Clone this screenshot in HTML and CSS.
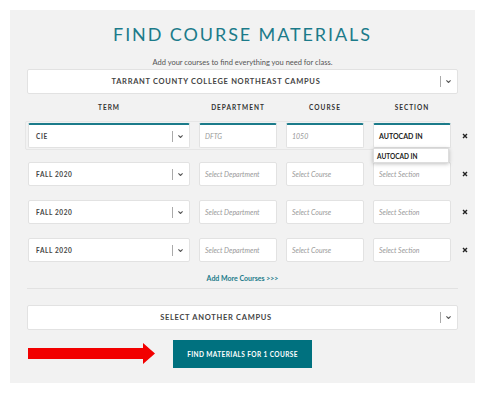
FILE: index.html
```html
<!DOCTYPE html>
<html lang="en">
<head>
  <meta charset="UTF-8" />
  <title>Find Course Materials</title>
  <link rel="stylesheet" href="styles.css">
</head>
<body>
  <div class="panel">
    <h1>FIND COURSE MATERIALS</h1>
    <p class="lead">Add your courses to find everything you need for class.</p>

    <div class="campus">
      <span class="campus-label">TARRANT COUNTY COLLEGE NORTHEAST CAMPUS</span>
      <span class="caret">
        <svg width="5" height="3" viewBox="0 0 5 3"><polyline points="0.4,0.4 2.5,2.5 4.6,0.4" fill="none" stroke="#555" stroke-width="1.1"/></svg>
      </span>
    </div>

    <div class="grid heads">
      <span>TERM</span>
      <span>DEPARTMENT</span>
      <span>COURSE</span>
      <span>SECTION</span>
      <span></span>
    </div>

    <div class="grid course active">
      <div class="box term"><span>CIE</span>
        <span class="caret"><svg width="5" height="3" viewBox="0 0 5 3"><polyline points="0.4,0.4 2.5,2.5 4.6,0.4" fill="none" stroke="#555" stroke-width="1.1"/></svg></span>
      </div>
      <div class="box field">DFTG</div>
      <div class="box field">1050</div>
      <div class="box field filled">AUTOCAD IN</div>
      <span class="remove"><svg width="6" height="6" viewBox="0 0 6 6"><path d="M1 1L5 5M5 1L1 5" stroke="#222" stroke-width="1.4"/></svg></span>
      <div class="menu">AUTOCAD IN</div>
    </div>

    <div class="grid course">
      <div class="box term"><span>FALL 2020</span>
        <span class="caret"><svg width="5" height="3" viewBox="0 0 5 3"><polyline points="0.4,0.4 2.5,2.5 4.6,0.4" fill="none" stroke="#555" stroke-width="1.1"/></svg></span>
      </div>
      <div class="box field">Select Department</div>
      <div class="box field">Select Course</div>
      <div class="box field">Select Section</div>
      <span class="remove"><svg width="6" height="6" viewBox="0 0 6 6"><path d="M1 1L5 5M5 1L1 5" stroke="#222" stroke-width="1.4"/></svg></span>
    </div>

    <div class="grid course">
      <div class="box term"><span>FALL 2020</span>
        <span class="caret"><svg width="5" height="3" viewBox="0 0 5 3"><polyline points="0.4,0.4 2.5,2.5 4.6,0.4" fill="none" stroke="#555" stroke-width="1.1"/></svg></span>
      </div>
      <div class="box field">Select Department</div>
      <div class="box field">Select Course</div>
      <div class="box field">Select Section</div>
      <span class="remove"><svg width="6" height="6" viewBox="0 0 6 6"><path d="M1 1L5 5M5 1L1 5" stroke="#222" stroke-width="1.4"/></svg></span>
    </div>

    <div class="grid course">
      <div class="box term"><span>FALL 2020</span>
        <span class="caret"><svg width="5" height="3" viewBox="0 0 5 3"><polyline points="0.4,0.4 2.5,2.5 4.6,0.4" fill="none" stroke="#555" stroke-width="1.1"/></svg></span>
      </div>
      <div class="box field">Select Department</div>
      <div class="box field">Select Course</div>
      <div class="box field">Select Section</div>
      <span class="remove"><svg width="6" height="6" viewBox="0 0 6 6"><path d="M1 1L5 5M5 1L1 5" stroke="#222" stroke-width="1.4"/></svg></span>
    </div>

    <a class="add-more" href="#">Add More Courses &gt;&gt;&gt;</a>
    <hr>

    <div class="campus other">
      <span class="campus-label">SELECT ANOTHER CAMPUS</span>
      <span class="caret">
        <svg width="5" height="3" viewBox="0 0 5 3"><polyline points="0.4,0.4 2.5,2.5 4.6,0.4" fill="none" stroke="#555" stroke-width="1.1"/></svg>
      </span>
    </div>

    <div class="submit">
      <svg class="arrow" width="127" height="21" viewBox="0 0 127 21"><polygon points="0,5 115,5 115,0 127,10.5 115,21 115,16 0,16" fill="#f20000"/></svg>
      <button class="btn">FIND MATERIALS FOR 1 COURSE</button>
    </div>
  </div>
</body>
</html>
```

FILE: styles.css
```css
body {
  margin: 0;
  background: #fff;
  font-family: Lato, "Open Sans", sans-serif;
  color: #444;
}
.panel {
  margin: 10px;
  height: 373px;
  box-sizing: border-box;
  background: #f2f2f2;
  padding: 14px 17px 0 17px;
}
h1 {
  margin: 0;
  text-align: center;
  font-size: 18px;
  line-height: 21px;
  font-weight: 400;
  letter-spacing: 1.9px;
  color: #1b7b8a;
}
.lead {
  margin: 13px 0 0;
  text-align: center;
  font-size: 7.5px;
  line-height: 10px;
  color: #555;
}
.campus {
  margin-top: 1px;
  height: 25px;
  box-sizing: border-box;
  background: #fff;
  border: 1px solid #e2e2e2;
  border-radius: 2px;
  display: flex;
  align-items: center;
}
.campus-label {
  flex: 1;
  text-align: center;
  padding-right: 36px;
  font-size: 7.5px;
  font-weight: 700;
  letter-spacing: 0.7px;
  color: #444;
}
.caret {
  display: flex;
  align-items: center;
  gap: 5px;
  width: 17px;
}
.caret::before {
  content: "";
  width: 1px;
  height: 11px;
  background: #aaa;
}
.caret svg {
  display: block;
}
.grid {
  display: grid;
  grid-template-columns: 162px 78px 78px 78px 10px;
  gap: 9px;
  margin-left: 1px;
}
.heads {
  margin-top: 8px;
  height: 10px;
  align-items: center;
  text-align: center;
  font-size: 6.5px;
  font-weight: 700;
  letter-spacing: 1px;
  color: #333;
}
.course {
  position: relative;
  height: 24px;
  margin-top: 14px;
  align-items: center;
}
.active {
  margin-top: 11px;
  height: 25px;
}
.active::before {
  content: "";
  position: absolute;
  left: -3px;
  top: -2px;
  bottom: -2px;
  right: 13px;
  border: 1px solid #e6e6e6;
  border-radius: 2px;
}
.box {
  position: relative;
  height: 100%;
  box-sizing: border-box;
  background: #fff;
  border: 1px solid #e2e2e2;
  border-radius: 2px;
  display: flex;
  align-items: center;
}
.active .box {
  border-top: 2px solid #1b7b8a;
}
.term {
  padding-left: 7px;
  font-size: 6.5px;
  font-weight: 700;
  letter-spacing: 0.6px;
  color: #444;
}
.term span:first-child {
  flex: 1;
}
.field {
  padding-left: 5px;
  font-size: 7px;
  font-style: italic;
  color: #999;
  white-space: nowrap;
  overflow: hidden;
}
.filled {
  font-style: normal;
  font-weight: 700;
  font-size: 7px;
  color: #222;
  padding-left: 5px;
}
.remove {
  display: flex;
  justify-content: center;
}
.remove svg {
  display: block;
}
.menu {
  position: absolute;
  left: 345px;
  top: 25px;
  width: 76px;
  height: 15px;
  box-sizing: border-box;
  padding-left: 3px;
  line-height: 15px;
  background: #fff;
  border: 1px solid #ddd;
  box-shadow: 0 1px 4px rgba(0, 0, 0, 0.25);
  font-size: 6.5px;
  font-weight: 700;
  color: #222;
  z-index: 2;
}
.add-more {
  display: block;
  margin-top: 11px;
  text-align: center;
  font-size: 7px;
  line-height: 10px;
  font-weight: 700;
  color: #1b7b8a;
  text-decoration: none;
}
hr {
  margin: 5px 0 0;
  border: none;
  border-top: 1px solid #e2e2e2;
}
.other {
  margin-top: 16px;
}
.submit {
  position: relative;
  margin-top: 10px;
  display: flex;
  justify-content: center;
}
.arrow {
  position: absolute;
  left: 1px;
  top: 3px;
}
.btn {
  width: 139px;
  height: 28px;
  border: none;
  background: #00717f;
  color: #fff;
  font-family: Lato, "Open Sans", sans-serif;
  font-size: 6.5px;
  font-weight: 700;
  letter-spacing: 0.4px;
  padding: 0;
}
```
